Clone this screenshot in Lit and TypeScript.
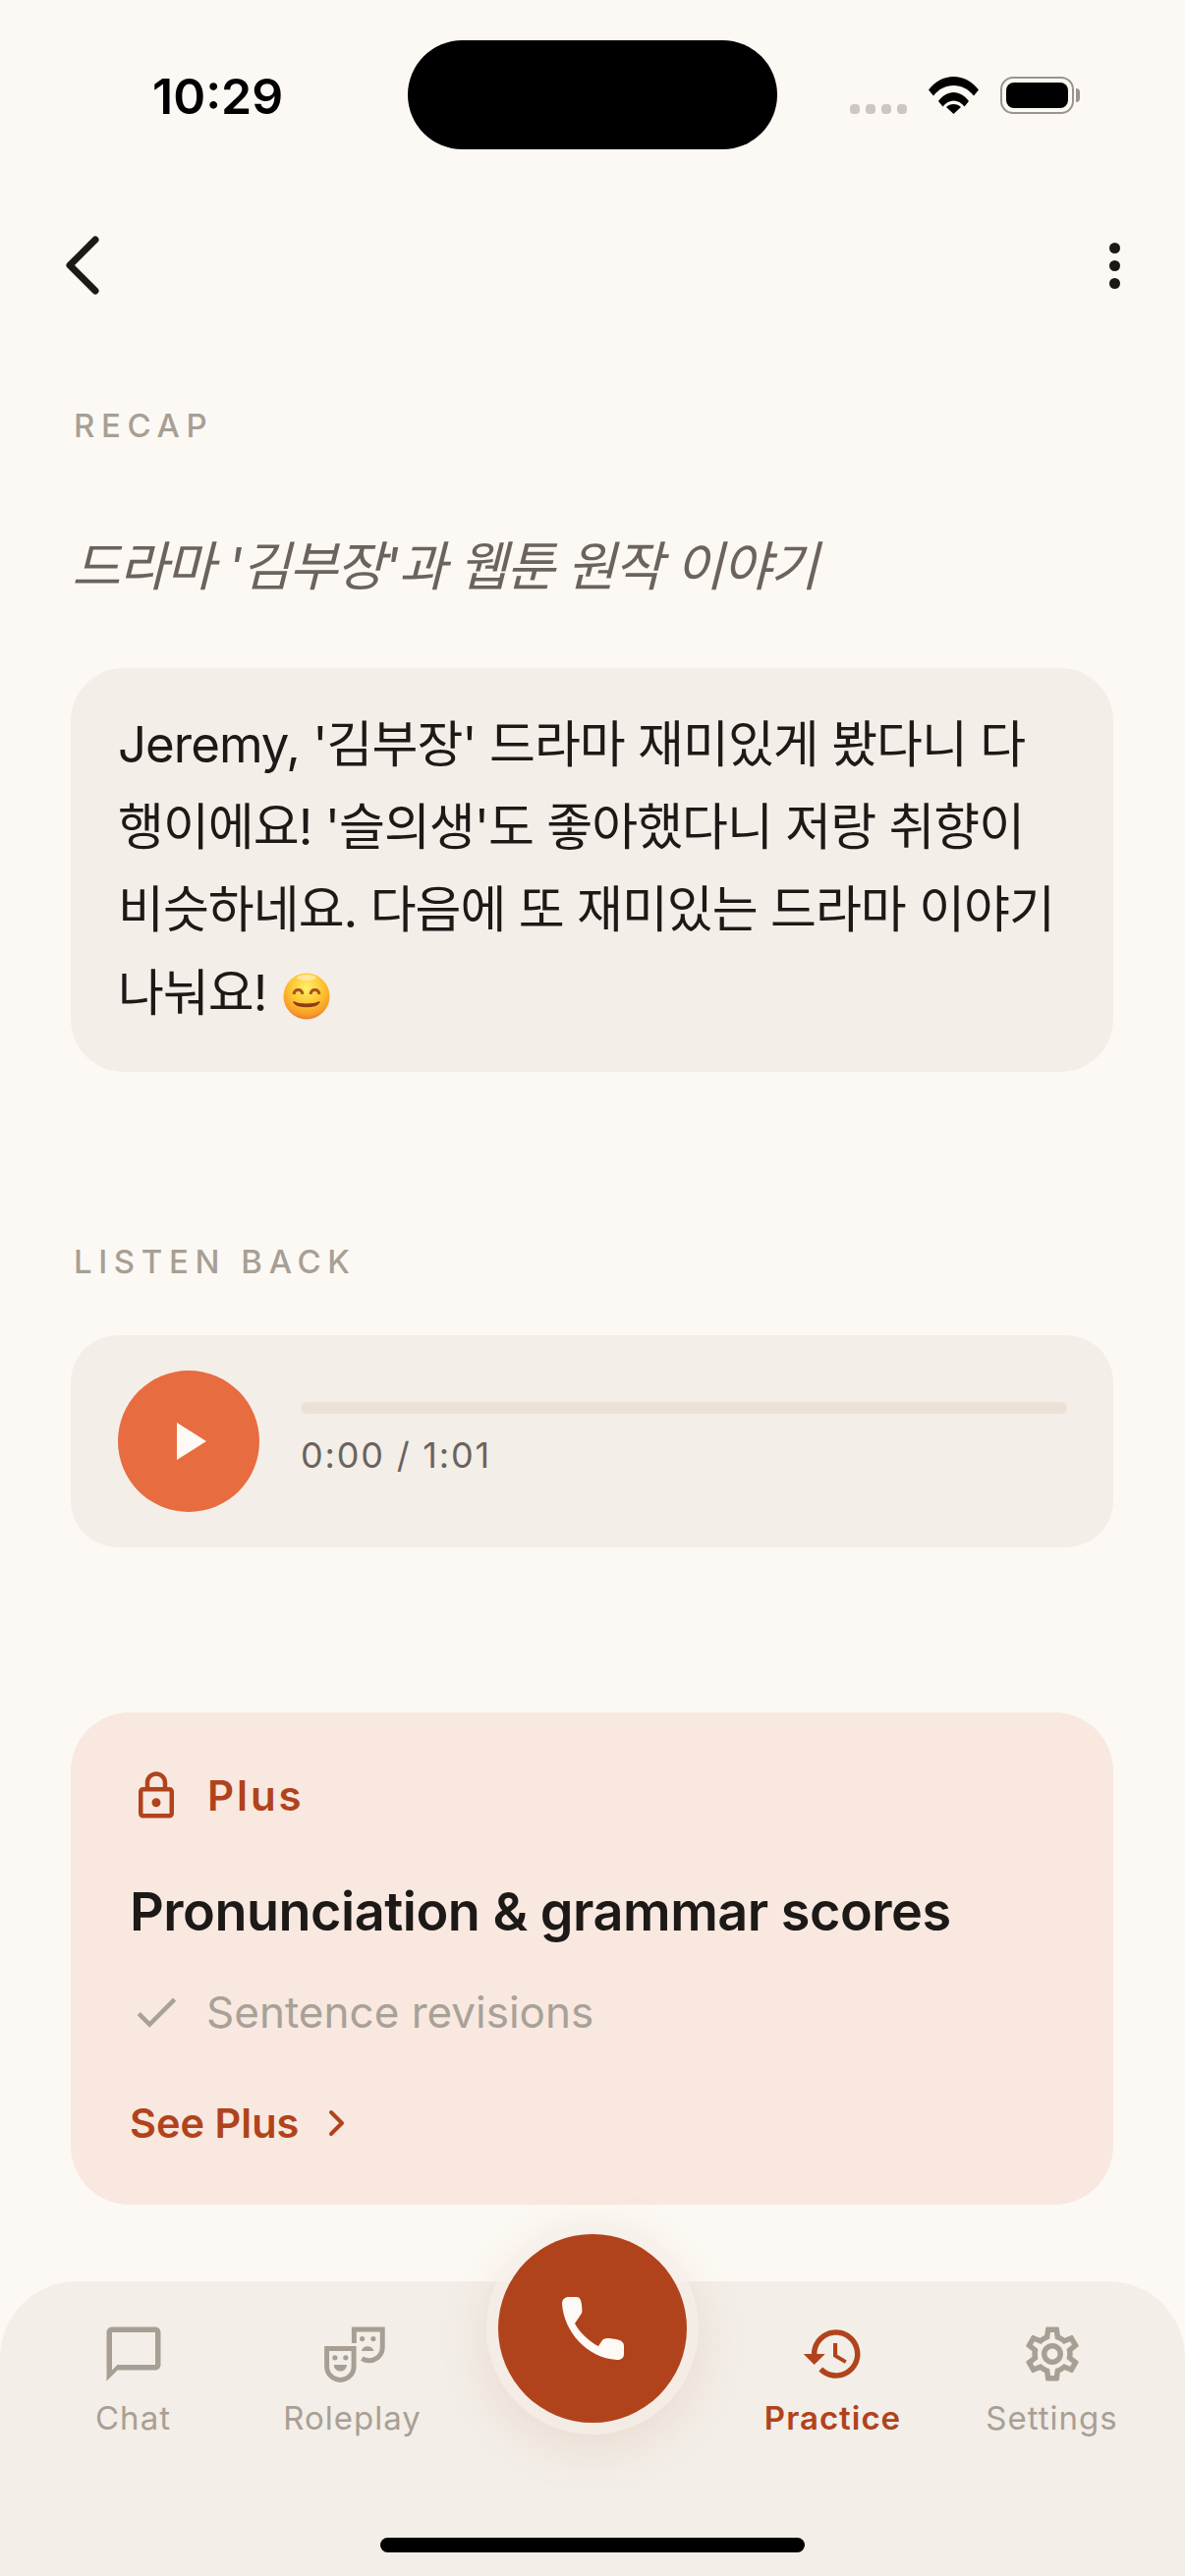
import { LitElement, css, html, svg } from "lit";
import { customElement } from "lit/decorators.js";

const TABS = [
  {
    label: "Chat",
    icon: svg`<path d="M20 2H4c-1.1 0-2 .9-2 2v18l4-4h14c1.1 0 2-.9 2-2V4c0-1.1-.9-2-2-2zm0 14H6l-2 2V4h16v12z" />`
  },
  {
    label: "Roleplay",
    icon: svg`
      <path d="M2.4 10h10v6.6a5 5 0 0 1-10 0z" fill="none" stroke="currentColor" stroke-width="1.8" />
      <circle cx="5.4" cy="13.4" r=".95" />
      <circle cx="9.4" cy="13.4" r=".95" />
      <path d="M5 16h4.8a2.4 2.4 0 0 1-4.8 0z" />
      <path d="M12.5 8V2.9H23v6.6a5 5 0 0 1-7.6 4.2" fill="none" stroke="currentColor" stroke-width="1.8" />
      <circle cx="15.5" cy="6.4" r=".95" />
      <circle cx="19.6" cy="6.4" r=".95" />
      <path d="M15.2 10.9a2.4 2.4 0 0 1 4.6 0z" />
    `
  },
  null,
  {
    label: "Practice",
    active: true,
    icon: svg`<path d="M13 3c-4.97 0-9 4.03-9 9H1l3.89 3.89.07.14L9 12H6c0-3.87 3.13-7 7-7s7 3.13 7 7-3.13 7-7 7c-1.93 0-3.68-.79-4.94-2.06l-1.42 1.42C8.27 19.99 10.51 21 13 21c4.97 0 9-4.03 9-9s-4.03-9-9-9zm-1 5v5l4.28 2.54.72-1.21-3.5-2.08V8H12z" />`
  },
  {
    label: "Settings",
    icon: svg`<path d="M19.43 12.98c.04-.32.07-.64.07-.98 0-.34-.03-.66-.07-.98l2.11-1.65c.19-.15.24-.42.12-.64l-2-3.46c-.09-.16-.26-.25-.44-.25-.06 0-.12.01-.17.03l-2.49 1c-.52-.4-1.08-.73-1.69-.98l-.38-2.65C14.46 2.18 14.25 2 14 2h-4c-.25 0-.46.18-.49.42l-.38 2.65c-.61.25-1.17.59-1.69.98l-2.49-1c-.06-.02-.12-.03-.18-.03-.17 0-.34.09-.43.25l-2 3.46c-.13.22-.07.49.12.64l2.11 1.65c-.04.32-.07.65-.07.98 0 .33.03.66.07.98l-2.11 1.65c-.19.15-.24.42-.12.64l2 3.46c.09.16.26.25.44.25.06 0 .12-.01.17-.03l2.49-1c.52.4 1.08.73 1.69.98l.38 2.65c.03.24.24.42.49.42h4c.25 0 .46-.18.49-.42l.38-2.65c.61-.25 1.17-.59 1.69-.98l2.49 1c.06.02.12.03.18.03.17 0 .34-.09.43-.25l2-3.46c.12-.22.07-.49-.12-.64l-2.11-1.65zm-1.98-1.71c.04.31.05.52.05.73 0 .21-.02.43-.05.73l-.14 1.13.89.7 1.08.84-.7 1.21-1.27-.51-1.04-.42-.9.68c-.43.32-.84.56-1.25.73l-1.06.43-.16 1.13-.2 1.35h-1.4l-.19-1.35-.16-1.13-1.06-.43c-.43-.18-.83-.41-1.23-.71l-.91-.7-1.06.43-1.27.51-.7-1.21 1.08-.84.89-.7-.14-1.13c-.03-.31-.05-.54-.05-.74s.02-.43.05-.73l.14-1.13-.89-.7-1.08-.84.7-1.21 1.27.51 1.04.42.9-.68c.43-.32.84-.56 1.25-.73l1.06-.43.16-1.13.2-1.35h1.39l.19 1.35.16 1.13 1.06.43c.43.18.83.41 1.23.71l.91.7 1.06-.43 1.27-.51.7 1.21-1.07.85-.89.7.14 1.13zM12 8c-2.21 0-4 1.79-4 4s1.79 4 4 4 4-1.79 4-4-1.79-4-4-4zm0 6c-1.1 0-2-.9-2-2s.9-2 2-2 2 .9 2 2-.9 2-2 2z" />`
  }
];

@customElement("app-root")
export class AppRoot extends LitElement {
  static styles = css`
    :host {
      display: flex;
      flex-direction: column;
      position: relative;
      width: 1206px;
      height: 2622px;
      overflow: hidden;
      background: #fcf9f4;
      color: #1c1917;
      font-family: Inter, "Noto Sans CJK KR", sans-serif;
    }

    svg {
      display: block;
      flex: none;
    }

    .status {
      display: flex;
      align-items: center;
      height: 111px;
      margin-top: 41px;
      padding-left: 155px;
    }

    .time {
      width: 260px;
      color: #000;
      font-size: 50px;
      font-weight: 600;
      line-height: 1;
      margin-top: 3px;
    }

    .island {
      width: 376px;
      height: 111px;
      border-radius: 56px;
      background: #000;
    }

    .status-right {
      display: flex;
      align-items: flex-end;
      gap: 22px;
      height: 38px;
      margin-left: 74px;
    }

    .signal {
      display: flex;
      gap: 6px;
    }

    .signal i {
      width: 10px;
      height: 10px;
      border-radius: 4px;
      background: #cdc6c1;
    }

    .battery {
      position: relative;
      box-sizing: border-box;
      width: 75px;
      height: 38px;
      padding: 4px;
      border: 2px solid #9a948e;
      border-radius: 13px;
    }

    .battery::before {
      content: "";
      display: block;
      height: 100%;
      border-radius: 8px;
      background: #000;
    }

    .battery::after {
      content: "";
      position: absolute;
      top: 10px;
      right: -8px;
      width: 4px;
      height: 14px;
      border-radius: 0 8px 8px 0;
      background: #9a948e;
    }

    .nav {
      display: flex;
      align-items: center;
      justify-content: space-between;
      height: 60px;
      margin-top: 88px;
      padding: 0 66px;
    }

    .menu {
      display: grid;
      gap: 7px;
    }

    .menu i {
      width: 11px;
      height: 11px;
      border-radius: 50%;
      background: #1c1917;
    }

    .content {
      display: flex;
      flex-direction: column;
      padding: 0 73px 0 72px;
    }

    .label {
      margin: 0 0 0 3px;
      color: #a89f94;
      font-size: 33px;
      font-weight: 500;
      line-height: 36px;
      letter-spacing: 6.6px;
    }

    .recap {
      margin-top: 115px;
    }

    .title {
      margin: 0 0 0 1px;
      padding-top: 88px;
      color: #6b635c;
      font-size: 54px;
      font-style: italic;
      font-weight: 400;
      line-height: 76px;
      letter-spacing: -1.5px;
    }

    .bubble {
      margin: 65px 0 0;
      padding: 36px 48px 38px;
      border-radius: 54px;
      background: #f3eee8;
      font-size: 51px;
      line-height: 84.2px;
      letter-spacing: -1px;
    }

    .emoji {
      display: inline-block;
      width: 48px;
      height: 48px;
      vertical-align: -9px;
      margin-left: 3px;
    }

    .listen {
      margin-top: 175px;
    }

    .player {
      display: flex;
      align-items: center;
      gap: 42px;
      height: 216px;
      margin-top: 57px;
      padding: 0 47px 0 48px;
      border-radius: 48px;
      background: #f3eee8;
    }

    .play {
      display: flex;
      align-items: center;
      justify-content: center;
      width: 144px;
      height: 144px;
      border-radius: 50%;
      background: #e76c3f;
    }

    .play svg {
      margin-left: 6px;
    }

    .track-column {
      flex: 1;
      display: grid;
      gap: 20px;
      padding-bottom: 3px;
    }

    .track {
      height: 12px;
      border-radius: 6px;
      background: #ebe1d7;
    }

    .clock {
      color: #6b635c;
      font-size: 36px;
      line-height: 44px;
      letter-spacing: 1.8px;
    }

    .plus {
      display: flex;
      flex-direction: column;
      height: 501px;
      box-sizing: border-box;
      margin-top: 168px;
      padding: 58px 60px 0;
      border-radius: 60px;
      background: #f8e8e0;
    }

    .row {
      display: flex;
      align-items: center;
      gap: 24px;
      height: 54px;
    }

    .plus-tag {
      gap: 25px;
      color: #b1431c;
      font-size: 42px;
      font-weight: 600;
      letter-spacing: 2.9px;
    }

    .plus h2 {
      margin: 58px 0 0;
      font-size: 54px;
      font-weight: 600;
      line-height: 66px;
      letter-spacing: -0.5px;
    }

    .feature {
      margin-top: 42px;
      color: #a8a198;
      font-size: 44px;
    }

    .see {
      display: flex;
      align-items: center;
      gap: 29px;
      margin-top: 59px;
      color: #b1431c;
      font-size: 41.5px;
      font-weight: 600;
      line-height: 54px;
    }

    .tabbar {
      position: relative;
      display: flex;
      flex-direction: column;
      align-items: center;
      height: 300px;
      box-sizing: border-box;
      margin-top: auto;
      padding: 41px 24px 0;
      border-radius: 78px 78px 0 0;
      background: #f3eee8;
    }

    .tabs {
      display: grid;
      grid-template-columns: 1fr 1fr 266px 1fr 1fr;
      width: 100%;
    }

    .tab {
      display: flex;
      flex-direction: column;
      align-items: center;
      gap: 12px;
      color: #a89f94;
      font-size: 33px;
      line-height: 40px;
      letter-spacing: 1px;
    }

    .tab.active {
      color: #b1431c;
      font-weight: 600;
    }

    .tab svg {
      fill: currentColor;
    }

    .call {
      position: absolute;
      top: -48px;
      left: 507px;
      display: flex;
      align-items: center;
      justify-content: center;
      width: 192px;
      height: 192px;
      border-radius: 50%;
      background: #b1431c;
      box-shadow: 0 0 0 12px rgb(247 241 235 / 70%), 0 12px 48px 14px rgb(190 130 90 / 16%);
    }

    .home {
      position: absolute;
      bottom: 24px;
      left: 387px;
      width: 432px;
      height: 15px;
      border-radius: 8px;
      background: #000;
    }
  `;

  renderStatus() {
    return html`
      <div class="status">
        <div class="time">10:29</div>
        <div class="island"></div>
        <div class="status-right">
          <div class="signal"><i></i><i></i><i></i><i></i></div>
          <svg width="51" height="38" viewBox="0 0 51 38" fill="#000">
            <path d="M0 13.5C6.5 5 15.5 0 25.5 0S44.500 5 51 13.500L46 19.500C40.500 12.500 33.500 9 25.500 9S10.500 12.500 5 19.500Z" />
            <path d="M10 25C14 19.500 19.500 16 25.500 16S37 19.500 41 25L36.500 30.500C33.500 26.500 29.500 24.500 25.500 24.500S17.500 26.500 14.500 30.500Z" />
            <path d="M18 31C20 29 22.500 28 25.500 28S31 29 33 31L25.500 38Z" />
          </svg>
          <div class="battery"></div>
        </div>
      </div>
    `;
  }

  renderEmoji() {
    return html`
      <svg class="emoji" viewBox="0 0 48 48">
        <defs>
          <radialGradient id="face" cx="50%" cy="32%" r="68%">
            <stop offset="0%" stop-color="#fff06a" />
            <stop offset="55%" stop-color="#fdc32f" />
            <stop offset="88%" stop-color="#f79a25" />
            <stop offset="100%" stop-color="#e9743a" />
          </radialGradient>
        </defs>
        <circle cx="24" cy="24" r="23.500" fill="url(#face)" />
        <ellipse cx="24" cy="5" rx="10" ry="3" fill="#fff" opacity=".45" />
        <path d="M11 22c1-6 8-6 9 0M28 22c1-6 8-6 9 0" fill="none" stroke="#a6521c" stroke-width="3" />
        <path d="M11 30c4 6 22 6 26 0-6 3-20 3-26 0z" fill="#8f3d16" stroke="#8f3d16" stroke-width="1.500" stroke-linejoin="round" />
      </svg>
    `;
  }

  render() {
    return html`
      ${this.renderStatus()}
      <div class="nav">
        <svg width="36" height="60" viewBox="0 0 36 60" fill="none" stroke="#1c1917" stroke-width="7" stroke-linecap="round" stroke-linejoin="round">
          <path d="M31 4 5 30l26 26" />
        </svg>
        <div class="menu"><i></i><i></i><i></i></div>
      </div>
      <main class="content">
        <h3 class="label recap">RECAP</h3>
        <h1 class="title">드라마 '김부장'과 웹툰 원작 이야기</h1>
        <p class="bubble">Jeremy, '김부장' 드라마 재미있게 봤다니 다행이에요! '슬의생'도 좋아했다니 저랑 취향이 비슷하네요. 다음에 또 재미있는 드라마 이야기 나눠요! ${this.renderEmoji()}</p>
        <h3 class="label listen">LISTEN BACK</h3>
        <div class="player">
          <div class="play">
            <svg width="30" height="38" viewBox="0 0 30 38" fill="#fdf9f4"><path d="M0 0 30 19 0 38z" /></svg>
          </div>
          <div class="track-column">
            <div class="track"></div>
            <div class="clock">0:00 / 1:01</div>
          </div>
        </div>
        <section class="plus">
          <div class="row plus-tag">
            <svg width="54" height="54" viewBox="0 0 24 24" fill="currentColor"><path d="M18 8h-1V6c0-2.760-2.240-5-5-5S7 3.240 7 6v2H6c-1.100 0-2 .9-2 2v10c0 1.100.9 2 2 2h12c1.100 0 2-.9 2-2V10c0-1.100-.9-2-2-2zM9 6c0-1.660 1.340-3 3-3s3 1.340 3 3v2H9V6zm9 14H6V10h12v10zm-6-3c1.100 0 2-.9 2-2s-.9-2-2-2-2 .9-2 2 .9 2 2 2z" /></svg>
            Plus
          </div>
          <h2>Pronunciation &amp; grammar scores</h2>
          <div class="row feature">
            <svg width="54" height="54" viewBox="0 0 24 24" fill="currentColor"><path d="M9 16.170 4.830 12l-1.420 1.410L9 19 21 7l-1.410-1.410z" /></svg>
            Sentence revisions
          </div>
          <div class="see">
            See Plus
            <svg width="20" height="28" viewBox="0 0 20 28" fill="none" stroke="currentColor" stroke-width="4" stroke-linecap="round" stroke-linejoin="round"><path d="m4 3 11 11L4 25" /></svg>
          </div>
        </section>
      </main>
      <nav class="tabbar">
        <div class="tabs">
          ${TABS.map(tab =>
            tab
              ? html`
                  <div class="tab ${tab.active ? "active" : ""}">
                    <svg width="66" height="66" viewBox="0 0 24 24">${tab.icon}</svg>
                    ${tab.label}
                  </div>
                `
              : html`<div></div>`
          )}
        </div>
        <div class="call">
          <svg width="63" height="64" viewBox="0 0 63 64" fill="#fdf9f4"><path d="M0 7C0 2.500 3 0 7 0h8c3 0 4.500 3 5 8 .5 5 1 8-1 10l-6 9c4 8 15 19 24 23l4-6c2-2 5-2 7-2l7 1c5 1 8 3 8 7v8c0 4-3 6-7 6C25 62 2 35 0 7z" /></svg>
        </div>
        <div class="home"></div>
      </nav>
    `;
  }
}
